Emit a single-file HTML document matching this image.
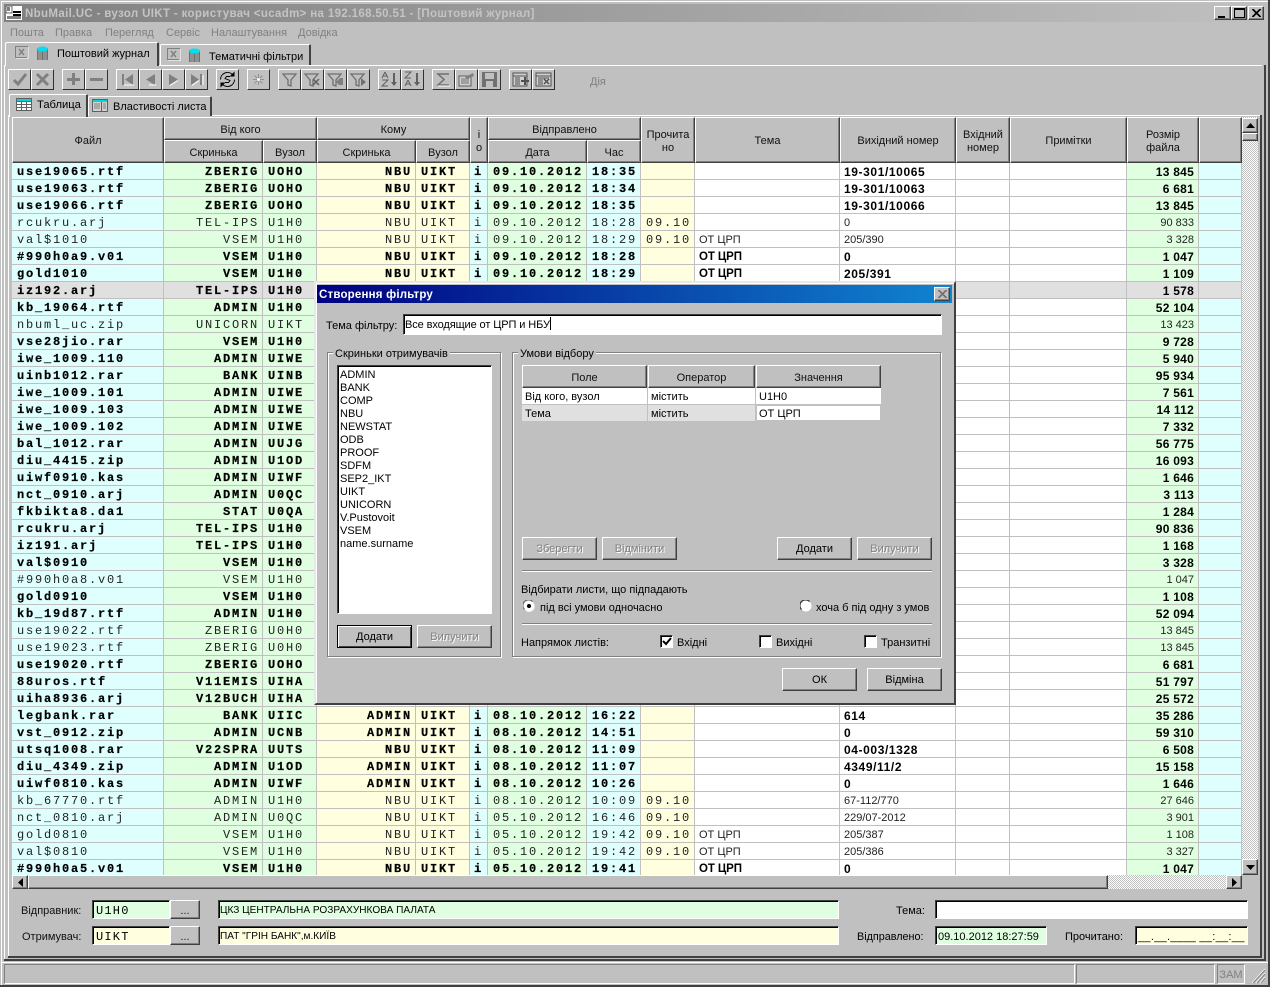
<!DOCTYPE html>
<html lang="uk">
<head>
<meta charset="utf-8">
<title>NbuMail.UC</title>
<style>
html,body{margin:0;padding:0;background:#c0c0c0}
#w{position:relative;width:1270px;height:987px;overflow:hidden;background:#c0c0c0;font:11px/13px "Liberation Sans","Noto Sans CJK SC",sans-serif;color:#000}
#w div,#w svg{position:absolute;box-sizing:border-box}
.t{white-space:nowrap;margin-top:1px}
.btn{background:#c0c0c0;border:1px solid;border-color:#fff #404040 #404040 #fff;box-shadow:inset -1px -1px 0 #808080;text-align:center;white-space:nowrap}
.hd{background:#c0c0c0;border:1px solid;border-color:#fff #404040 #404040 #fff;box-shadow:inset -1px -1px 0 #808080;text-align:center;display:flex;align-items:center;justify-content:center;line-height:13px;color:#111;padding-top:4px}
.hd.m{padding-top:2px}
.dis{color:#808080;text-shadow:1px 1px 0 #fff}
.sunk{border:1px solid;border-color:#404040 #fff #fff #404040;box-shadow:inset 1px 1px 0 #000;background:#fff;white-space:nowrap;overflow:hidden}
.tb{width:23px;height:21px;background:#c0c0c0;border:1px solid;border-color:#fff #303030 #303030 #fff}
.tb svg{left:0;top:0;width:21px;height:19px}
.ln{background:#fff}
.dk{background:#404040}
.mono{font-family:"Liberation Mono",monospace;font-size:12px;letter-spacing:1.4px}
.gb{border:1px solid #808080;box-shadow:1px 1px 0 #fff,inset 1px 1px 0 #fff}
.gt{background:#c0c0c0;padding:0 2px;white-space:nowrap;margin-top:1px}
table{position:absolute;left:12px;top:163px;width:1230px;table-layout:fixed;border-collapse:separate;border-spacing:0}
td{height:14px;padding:2px 4px 0 5px;border-right:1px solid #c0c0c0;border-bottom:1px solid #c0c0c0;overflow:hidden;white-space:nowrap;background:#fff;font:12px/14px "Liberation Mono",monospace;letter-spacing:1.8px;color:#222}
tr.b td{font-weight:bold;color:#000;-webkit-text-stroke:.2px #000}
td:nth-child(1){background:#dfffff}
td:nth-child(2),td:nth-child(3),td:nth-child(7){background:#e0ffe0}
td:nth-child(4),td:nth-child(5),td:nth-child(9){background:#ffffe0}
td:nth-child(6),td:nth-child(8),td:nth-child(15){background:#dfffff}
td:nth-child(14){background:#e0ffe0}
td:nth-child(2),td:nth-child(4){text-align:right;padding-right:3px}
td:nth-child(6){text-align:center;padding-left:0;padding-right:0}
td:nth-child(10),td:nth-child(11){font:11px/14px "Liberation Sans",sans-serif;letter-spacing:0;padding-left:4px}
td:nth-child(14){text-align:right;font:11px/14px "Liberation Sans",sans-serif;letter-spacing:0}
tr.b td:nth-child(10),tr.b td:nth-child(11),tr.b td:nth-child(14){font-size:12px;letter-spacing:.25px;-webkit-text-stroke:0}
tr.b td:nth-child(10){font-size:11.5px;letter-spacing:-.1px}
tr.b td:nth-child(11){letter-spacing:.6px}
tr.s td{background:#e0e0e0}
</style>
</head>
<body>
<div id="w">

<!-- window frame -->
<div class="ln" style="left:1px;top:1px;width:1267px;height:1px"></div>
<div class="ln" style="left:1px;top:1px;width:1px;height:985px"></div>
<div class="dk" style="left:1268px;top:0;width:2px;height:987px"></div>
<div class="dk" style="left:0;top:985px;width:1270px;height:2px"></div>

<!-- title bar -->
<div style="left:4px;top:4px;width:1262px;height:18px;background:linear-gradient(90deg,#808080,#c0c0c0)"></div>
<svg style="left:6px;top:6px" width="16" height="14" viewBox="0 0 16 14"><rect width="16" height="14" fill="#fff"/><rect x="0" y="0" width="6" height="7" fill="#fff" stroke="#000" stroke-width=".6"/><path d="M1 2h3M1 4h3" stroke="#000"/><rect x="7" y="5" width="8" height="2" fill="#000"/><rect x="7" y="8" width="8" height="2" fill="#000"/><rect x="1" y="10" width="14" height="3" fill="#808080"/></svg>
<div class="t" style="left:25px;top:7px;font-weight:bold;font-size:11.5px;letter-spacing:.35px;color:#c4c4c4">NbuMail.UC - вузол UIKT - користувач &lt;ucadm&gt; на 192.168.50.51 - [Поштовий журнал]</div>
<div class="btn" style="left:1214px;top:6px;width:17px;height:14px"><div style="left:3px;top:9px;width:7px;height:2px;background:#000"></div></div>
<div class="btn" style="left:1231px;top:6px;width:16px;height:14px"><div style="left:2px;top:1px;width:11px;height:10px;border:1px solid #000;border-top-width:2px"></div></div>
<div class="btn" style="left:1248px;top:6px;width:16px;height:14px"><svg style="left:3px;top:2px" width="9" height="8"><path d="M0 0L8 8M8 0L0 8M1 0L9 8M9 0L1 8" stroke="#000"/></svg></div>

<!-- menu -->
<div class="t" style="left:10px;top:26px;color:#808080">Пошта</div>
<div class="t" style="left:55px;top:26px;color:#808080">Правка</div>
<div class="t" style="left:105px;top:26px;color:#808080">Перегляд</div>
<div class="t" style="left:166px;top:26px;color:#808080">Сервіс</div>
<div class="t" style="left:211px;top:26px;color:#808080">Налаштування</div>
<div class="t" style="left:298px;top:26px;color:#808080">Довідка</div>

<!-- outer tabs -->
<div class="ln" style="left:4px;top:65px;width:1258px;height:1px"></div>
<div class="ln" style="left:4px;top:65px;width:1px;height:896px"></div>
<div class="dk" style="left:1264px;top:65px;width:2px;height:896px"></div>
<div class="dk" style="left:4px;top:959px;width:1262px;height:2px"></div>
<div style="left:5px;top:42px;width:154px;height:24px;background:#c0c0c0;border-top:1px solid #fff;border-left:1px solid #fff;border-right:2px solid #404040;border-radius:2px 2px 0 0"></div>
<div style="left:160px;top:44px;width:151px;height:21px;background:#c0c0c0;border-top:1px solid #fff;border-left:1px solid #fff;border-right:2px solid #404040;border-radius:2px 2px 0 0"></div>
<svg style="left:15px;top:46px" width="14" height="13"><rect x=".5" y=".5" width="12" height="11" fill="#c0c0c0" stroke="#808080"/><path d="M4 3l5 6M9 3l-5 6" stroke="#808080" stroke-width="1.4"/><path d="M13 1v12H1" stroke="#fff" fill="none"/></svg>
<svg style="left:36px;top:46px" width="13" height="15"><rect x="1" y="2" width="11" height="12" fill="#707070"/><path d="M3 4v10M5 4v10M8 4v10M10 4v10" stroke="#b0b0b0"/><ellipse cx="6.500" cy="3" rx="5.500" ry="2.500" fill="#00e0f0"/></svg>
<div class="t" style="left:57px;top:47px">Поштовий журнал</div>
<svg style="left:167px;top:48px" width="14" height="13"><rect x=".5" y=".5" width="12" height="11" fill="#c0c0c0" stroke="#808080"/><path d="M4 3l5 6M9 3l-5 6" stroke="#808080" stroke-width="1.4"/><path d="M13 1v12H1" stroke="#fff" fill="none"/></svg>
<svg style="left:188px;top:48px" width="13" height="15"><rect x="1" y="2" width="11" height="12" fill="#707070"/><path d="M3 4v10M5 4v10M8 4v10M10 4v10" stroke="#b0b0b0"/><ellipse cx="6.500" cy="3" rx="5.500" ry="2.500" fill="#00e0f0"/></svg>
<div class="t" style="left:209px;top:50px">Тематичні фільтри</div>

<!-- toolbar -->
<div class="tb" style="left:8px;top:69px"><svg viewBox="0 0 21 19"><path d="M5 10l4 4 8-10" fill="none" stroke="#808080" stroke-width="3"/></svg></div>
<div class="tb" style="left:31px;top:69px"><svg viewBox="0 0 21 19"><path d="M5 4l11 11M16 4L5 15" fill="none" stroke="#808080" stroke-width="3"/></svg></div>
<div class="tb" style="left:62px;top:69px"><svg viewBox="0 0 21 19"><path d="M10.500 3v12M4 9.500h13" stroke="#808080" stroke-width="3"/></svg></div>
<div class="tb" style="left:85px;top:69px"><svg viewBox="0 0 21 19"><path d="M4 9.500h13" stroke="#808080" stroke-width="3"/></svg></div>
<div class="tb" style="left:116px;top:69px"><svg viewBox="0 0 21 19"><path d="M5 4h2v11H5zM16 4v11L8 9.500z" fill="#808080"/><path d="M17 15H7" stroke="#fff"/></svg></div>
<div class="tb" style="left:139px;top:69px"><svg viewBox="0 0 21 19"><path d="M15 4v11L6 9.500z" fill="#808080"/><path d="M16 15H9" stroke="#fff"/></svg></div>
<div class="tb" style="left:162px;top:69px"><svg viewBox="0 0 21 19"><path d="M6 4v11l9-5.500z" fill="#808080"/><path d="M7 15.500l8-5" stroke="#fff"/></svg></div>
<div class="tb" style="left:185px;top:69px"><svg viewBox="0 0 21 19"><path d="M14 4h2v11h-2zM5 4v11l8-5.500z" fill="#808080"/><path d="M6 15.500l7-5M17 5v10" stroke="#fff"/></svg></div>
<div class="tb" style="left:216px;top:69px"><svg viewBox="0 0 21 19"><path d="M3.500 9.500A7 7 0 0 1 15.500 4.600M17.500 9.500A7 7 0 0 1 5.500 14.400" fill="none" stroke="#000"/><path d="M17.500 1.500v5h-5zM3.500 17.500v-5h5z" fill="#000"/><path d="M13 6.500H9.500L8 8.500l5 2-1.500 2H8" fill="none" stroke="#000" stroke-width=".9"/></svg></div>
<div class="tb" style="left:247px;top:69px"><svg viewBox="0 0 21 19"><path d="M10.500 4v11M5 9.500h11M6.500 5.500l8 8M14.500 5.500l-8 8" stroke="#909090"/><circle cx="10.500" cy="9.500" r="1.500" fill="#fff"/></svg></div>
<div class="tb" style="left:278px;top:69px"><svg viewBox="0 0 21 19"><path d="M4 4h13l-5 6v6l-3-1v-5z" fill="#c0c0c0" stroke="#707070" stroke-width="1.300"/></svg></div>
<div class="tb" style="left:301px;top:69px"><svg viewBox="0 0 21 19"><path d="M3 4h13l-5 6v6l-3-1v-5z" fill="#c0c0c0" stroke="#707070" stroke-width="1.300"/><path d="M11 9l6 6M17 9l-6 6" stroke="#606060" stroke-width="1.500"/></svg></div>
<div class="tb" style="left:324px;top:69px"><svg viewBox="0 0 21 19"><path d="M3 4h13l-5 6v6l-3-1v-5z" fill="#c0c0c0" stroke="#707070" stroke-width="1.300"/><path d="M18 8h-3l-4 4 3 3h4z" fill="#808080"/></svg></div>
<div class="tb" style="left:347px;top:69px"><svg viewBox="0 0 21 19"><path d="M3 4h13l-5 6v6l-3-1v-5z" fill="#c0c0c0" stroke="#707070" stroke-width="1.300"/><path d="M13 8l5 4-5 4z" fill="#707070"/></svg></div>
<div class="tb" style="left:378px;top:69px"><svg viewBox="0 0 21 19"><path d="M6 2l-3 6M6 2l3 6M4 6h4M3 10h6l-6 6h6" fill="none" stroke="#606060"/><path d="M15 3v11" stroke="#606060" stroke-width="2"/><path d="M12 12h6l-3 4z" fill="#606060"/></svg></div>
<div class="tb" style="left:401px;top:69px"><svg viewBox="0 0 21 19"><path d="M3 2h6L3 8h6M6 10l-3 6M6 10l3 6M4 14h4" fill="none" stroke="#606060"/><path d="M15 3v11" stroke="#606060" stroke-width="2"/><path d="M12 12h6l-3 4z" fill="#606060"/></svg></div>
<div class="tb" style="left:432px;top:69px"><svg viewBox="0 0 21 19"><path d="M16 4H5l6 5.500-6 5.500h11" fill="none" stroke="#707070" stroke-width="1.500"/><path d="M5 16h12" stroke="#fff"/></svg></div>
<div class="tb" style="left:455px;top:69px"><svg viewBox="0 0 21 19"><path d="M3 6h12v10H3z" fill="#d0d0d0" stroke="#606060"/><path d="M5 9h8M5 11h8M5 13h8" stroke="#707070"/><path d="M9 7l8-4 1 3-7 3z" fill="#808080"/></svg></div>
<div class="tb" style="left:478px;top:69px"><svg viewBox="0 0 21 19"><rect x="3" y="2" width="15" height="15" fill="#707070"/><rect x="6" y="3" width="9" height="6" fill="#c0c0c0"/><rect x="7" y="11" width="7" height="6" fill="#c0c0c0"/></svg></div>
<div class="tb" style="left:509px;top:69px"><svg viewBox="0 0 21 19"><rect x="3" y="3" width="14" height="13" fill="#d0d0d0" stroke="#505050"/><path d="M3 6h14M5 8h5M5 10h5M5 12h5M5 14h5" stroke="#505050"/><path d="M11 11h8M15 7v8" stroke="#505050" stroke-width="2"/></svg></div>
<div class="tb" style="left:532px;top:69px"><svg viewBox="0 0 21 19"><rect x="3" y="3" width="15" height="13" fill="#d0d0d0" stroke="#505050"/><path d="M3 6h15M5 8h11M5 10h5M5 12h5M5 14h5" stroke="#505050"/><path d="M11 9l5 5M16 9l-5 5" stroke="#505050" stroke-width="1.500"/></svg></div>
<div class="t" style="left:590px;top:75px;color:#808080">Дія</div>

<!-- inner tabs -->
<div class="ln" style="left:8px;top:115px;width:1252px;height:1px"></div>
<div class="ln" style="left:8px;top:115px;width:1px;height:842px"></div>
<div class="dk" style="left:1260px;top:115px;width:2px;height:843px"></div>
<div class="dk" style="left:8px;top:956px;width:1254px;height:2px"></div>
<div style="left:9px;top:94px;width:79px;height:23px;background:#c0c0c0;border-top:1px solid #fff;border-left:1px solid #fff;border-right:2px solid #404040;border-radius:2px 2px 0 0"></div>
<div style="left:88px;top:96px;width:124px;height:20px;background:#c0c0c0;border-top:1px solid #fff;border-left:1px solid #fff;border-right:2px solid #404040;border-radius:2px 2px 0 0"></div>
<svg style="left:16px;top:98px" width="16" height="13"><rect width="16" height="13" fill="#fff"/><rect width="16" height="3" fill="#00d8d8"/><path d="M0 .5h16M0 3.500h16M0 6.500h16M0 9.500h16M0 12.500h16M.5 0v13M5.500 3v10M10.500 3v10M15.500 0v13" stroke="#606060"/></svg>
<div class="t" style="left:37px;top:98px;font-size:11.200px">Таблица</div>
<svg style="left:92px;top:99px" width="16" height="13"><rect width="16" height="13" fill="#d0d0d0"/><rect width="16" height="3" fill="#00d8d8"/><path d="M0 .5h16M0 12.500h16M.5 0v13M15.500 0v13M9.500 3v10" stroke="#606060"/><path d="M2 5h6M2 7h6M2 9h6M11 5h3M11 7h3M11 9h3" stroke="#808080"/></svg>
<div class="t" style="left:113px;top:100px">Властивості листа</div>

<!-- grid headers -->
<div class="hd m" style="left:12px;top:117px;width:152px;height:46px">Файл</div>
<div class="hd" style="left:164px;top:117px;width:153px;height:23px">Від кого</div>
<div class="hd" style="left:164px;top:140px;width:99px;height:23px">Скринька</div>
<div class="hd" style="left:263px;top:140px;width:54px;height:23px">Вузол</div>
<div class="hd" style="left:317px;top:117px;width:153px;height:23px">Кому</div>
<div class="hd" style="left:317px;top:140px;width:99px;height:23px">Скринька</div>
<div class="hd" style="left:416px;top:140px;width:54px;height:23px">Вузол</div>
<div class="hd" style="left:470px;top:117px;width:18px;height:46px">i<br>o</div>
<div class="hd" style="left:488px;top:117px;width:153px;height:23px">Відправлено</div>
<div class="hd" style="left:488px;top:140px;width:99px;height:23px">Дата</div>
<div class="hd" style="left:587px;top:140px;width:54px;height:23px">Час</div>
<div class="hd" style="left:641px;top:117px;width:54px;height:46px">Прочита<br>но</div>
<div class="hd m" style="left:695px;top:117px;width:145px;height:46px">Тема</div>
<div class="hd m" style="left:840px;top:117px;width:116px;height:46px">Вихідний номер</div>
<div class="hd" style="left:956px;top:117px;width:54px;height:46px">Вхідний<br>номер</div>
<div class="hd m" style="left:1010px;top:117px;width:117px;height:46px">Примітки</div>
<div class="hd" style="left:1127px;top:117px;width:72px;height:46px">Розмір<br>файла</div>
<div class="hd" style="left:1199px;top:117px;width:43px;height:46px"></div>

<!-- grid body -->
<div style="left:0;top:0;width:1242px;height:875px;overflow:hidden;pointer-events:none">
<table>
<colgroup><col style="width:152px"><col style="width:99px"><col style="width:54px"><col style="width:99px"><col style="width:54px"><col style="width:18px"><col style="width:99px"><col style="width:54px"><col style="width:54px"><col style="width:145px"><col style="width:116px"><col style="width:54px"><col style="width:117px"><col style="width:72px"><col style="width:43px"></colgroup>
<tr class="b"><td>use19065.rtf<td>ZBERIG<td>UOHO<td>NBU<td>UIKT<td>i<td>09.10.2012<td>18:35<td><td><td>19-301/10065<td><td><td>13 845<td></tr>
<tr class="b"><td>use19063.rtf<td>ZBERIG<td>UOHO<td>NBU<td>UIKT<td>i<td>09.10.2012<td>18:34<td><td><td>19-301/10063<td><td><td>6 681<td></tr>
<tr class="b"><td>use19066.rtf<td>ZBERIG<td>UOHO<td>NBU<td>UIKT<td>i<td>09.10.2012<td>18:35<td><td><td>19-301/10066<td><td><td>13 845<td></tr>
<tr><td>rcukru.arj<td>TEL-IPS<td>U1H0<td>NBU<td>UIKT<td>i<td>09.10.2012<td>18:28<td>09.10<td><td>0<td><td><td>90 833<td></tr>
<tr><td>val$1010<td>VSEM<td>U1H0<td>NBU<td>UIKT<td>i<td>09.10.2012<td>18:29<td>09.10<td>ОТ ЦРП<td>205/390<td><td><td>3 328<td></tr>
<tr class="b"><td>#990h0a9.v01<td>VSEM<td>U1H0<td>NBU<td>UIKT<td>i<td>09.10.2012<td>18:28<td><td>ОТ ЦРП<td>0<td><td><td>1 047<td></tr>
<tr class="b"><td>gold1010<td>VSEM<td>U1H0<td>NBU<td>UIKT<td>i<td>09.10.2012<td>18:29<td><td>ОТ ЦРП<td>205/391<td><td><td>1 109<td></tr>
<tr class="b s"><td>iz192.arj<td>TEL-IPS<td>U1H0<td><td><td><td><td><td><td><td><td><td><td>1 578<td></tr>
<tr class="b"><td>kb_19064.rtf<td>ADMIN<td>U1H0<td><td><td><td><td><td><td><td><td><td><td>52 104<td></tr>
<tr><td>nbuml_uc.zip<td>UNICORN<td>UIKT<td><td><td><td><td><td><td><td><td><td><td>13 423<td></tr>
<tr class="b"><td>vse28jio.rar<td>VSEM<td>U1H0<td><td><td><td><td><td><td><td><td><td><td>9 728<td></tr>
<tr class="b"><td>iwe_1009.110<td>ADMIN<td>UIWE<td><td><td><td><td><td><td><td><td><td><td>5 940<td></tr>
<tr class="b"><td>uinb1012.rar<td>BANK<td>UINB<td><td><td><td><td><td><td><td><td><td><td>95 934<td></tr>
<tr class="b"><td>iwe_1009.101<td>ADMIN<td>UIWE<td><td><td><td><td><td><td><td><td><td><td>7 561<td></tr>
<tr class="b"><td>iwe_1009.103<td>ADMIN<td>UIWE<td><td><td><td><td><td><td><td><td><td><td>14 112<td></tr>
<tr class="b"><td>iwe_1009.102<td>ADMIN<td>UIWE<td><td><td><td><td><td><td><td><td><td><td>7 332<td></tr>
<tr class="b"><td>bal_1012.rar<td>ADMIN<td>UUJG<td><td><td><td><td><td><td><td><td><td><td>56 775<td></tr>
<tr class="b"><td>diu_4415.zip<td>ADMIN<td>U1OD<td><td><td><td><td><td><td><td><td><td><td>16 093<td></tr>
<tr class="b"><td>uiwf0910.kas<td>ADMIN<td>UIWF<td><td><td><td><td><td><td><td><td><td><td>1 646<td></tr>
<tr class="b"><td>nct_0910.arj<td>ADMIN<td>U0QC<td><td><td><td><td><td><td><td><td><td><td>3 113<td></tr>
<tr class="b"><td>fkbikta8.da1<td>STAT<td>U0QA<td><td><td><td><td><td><td><td><td><td><td>1 284<td></tr>
<tr class="b"><td>rcukru.arj<td>TEL-IPS<td>U1H0<td><td><td><td><td><td><td><td><td><td><td>90 836<td></tr>
<tr class="b"><td>iz191.arj<td>TEL-IPS<td>U1H0<td><td><td><td><td><td><td><td><td><td><td>1 168<td></tr>
<tr class="b"><td>val$0910<td>VSEM<td>U1H0<td><td><td><td><td><td><td><td><td><td><td>3 328<td></tr>
<tr><td>#990h0a8.v01<td>VSEM<td>U1H0<td><td><td><td><td><td><td><td><td><td><td>1 047<td></tr>
<tr class="b"><td>gold0910<td>VSEM<td>U1H0<td><td><td><td><td><td><td><td><td><td><td>1 108<td></tr>
<tr class="b"><td>kb_19d87.rtf<td>ADMIN<td>U1H0<td><td><td><td><td><td><td><td><td><td><td>52 094<td></tr>
<tr><td>use19022.rtf<td>ZBERIG<td>U0H0<td><td><td><td><td><td><td><td><td><td><td>13 845<td></tr>
<tr><td>use19023.rtf<td>ZBERIG<td>U0H0<td><td><td><td><td><td><td><td><td><td><td>13 845<td></tr>
<tr class="b"><td>use19020.rtf<td>ZBERIG<td>UOHO<td><td><td><td><td><td><td><td><td><td><td>6 681<td></tr>
<tr class="b"><td>88uros.rtf<td>V11EMIS<td>UIHA<td><td><td><td><td><td><td><td><td><td><td>51 797<td></tr>
<tr class="b"><td>uiha8936.arj<td>V12BUCH<td>UIHA<td><td><td><td><td><td><td><td><td><td><td>25 572<td></tr>
<tr class="b"><td>legbank.rar<td>BANK<td>UIIC<td>ADMIN<td>UIKT<td>i<td>08.10.2012<td>16:22<td><td><td>614<td><td><td>35 286<td></tr>
<tr class="b"><td>vst_0912.zip<td>ADMIN<td>UCNB<td>ADMIN<td>UIKT<td>i<td>08.10.2012<td>14:51<td><td><td>0<td><td><td>59 310<td></tr>
<tr class="b"><td>utsq1008.rar<td>V22SPRA<td>UUTS<td>NBU<td>UIKT<td>i<td>08.10.2012<td>11:09<td><td><td>04-003/1328<td><td><td>6 508<td></tr>
<tr class="b"><td>diu_4349.zip<td>ADMIN<td>U1OD<td>ADMIN<td>UIKT<td>i<td>08.10.2012<td>11:07<td><td><td>4349/11/2<td><td><td>15 158<td></tr>
<tr class="b"><td>uiwf0810.kas<td>ADMIN<td>UIWF<td>ADMIN<td>UIKT<td>i<td>08.10.2012<td>10:26<td><td><td>0<td><td><td>1 646<td></tr>
<tr><td>kb_67770.rtf<td>ADMIN<td>U1H0<td>NBU<td>UIKT<td>i<td>08.10.2012<td>10:09<td>09.10<td><td>67-112/770<td><td><td>27 646<td></tr>
<tr><td>nct_0810.arj<td>ADMIN<td>U0QC<td>NBU<td>UIKT<td>i<td>05.10.2012<td>16:46<td>09.10<td><td>229/07-2012<td><td><td>3 901<td></tr>
<tr><td>gold0810<td>VSEM<td>U1H0<td>NBU<td>UIKT<td>i<td>05.10.2012<td>19:42<td>09.10<td>ОТ ЦРП<td>205/387<td><td><td>1 108<td></tr>
<tr><td>val$0810<td>VSEM<td>U1H0<td>NBU<td>UIKT<td>i<td>05.10.2012<td>19:42<td>09.10<td>ОТ ЦРП<td>205/386<td><td><td>3 327<td></tr>
<tr class="b"><td>#990h0a5.v01<td>VSEM<td>U1H0<td>NBU<td>UIKT<td>i<td>05.10.2012<td>19:41<td><td>ОТ ЦРП<td>0<td><td><td>1 047<td></tr>
</table>
</div>

<!-- vertical scrollbar -->
<div style="left:1242px;top:117px;width:16px;height:758px;background:repeating-conic-gradient(#c0c0c0 0 25%,#fff 0 50%) 0 0/2px 2px"></div>
<div class="btn" style="left:1242px;top:118px;width:16px;height:15px"><svg style="left:3px;top:4px" width="9" height="5"><path d="M4.500 0L9 5H0z" fill="#000"/></svg></div>
<div class="btn" style="left:1242px;top:133px;width:16px;height:8px"></div>
<div class="btn" style="left:1242px;top:859px;width:16px;height:16px"><svg style="left:3px;top:5px" width="9" height="5"><path d="M0 0h9L4.500 5z" fill="#000"/></svg></div>

<!-- horizontal scrollbar -->
<div style="left:12px;top:875px;width:1230px;height:14px;background:repeating-conic-gradient(#c0c0c0 0 25%,#fff 0 50%) 0 0/2px 2px"></div>
<div class="btn" style="left:12px;top:875px;width:16px;height:14px"><svg style="left:5px;top:2px" width="5" height="9"><path d="M5 0v9L0 4.500z" fill="#000"/></svg></div>
<div class="btn" style="left:28px;top:875px;width:1080px;height:14px"></div>
<div class="btn" style="left:1226px;top:875px;width:16px;height:14px"><svg style="left:5px;top:2px" width="5" height="9"><path d="M0 0v9l5-4.500z" fill="#000"/></svg></div>

<!-- bottom form -->
<div class="t" style="left:21px;top:904px;color:#111">Відправник:</div>
<div class="sunk mono" style="left:92px;top:900px;width:78px;height:19px;background:#e0ffe0;padding:3px 0 0 3px;line-height:14px;letter-spacing:1.2px">U1H0</div>
<div class="btn" style="left:170px;top:900px;width:30px;height:19px;line-height:20px;color:#222">...</div>
<div class="sunk" style="left:218px;top:900px;width:621px;height:19px;background:#e0ffe0;padding:3px 0 0 1px;font-size:10.100px;line-height:14px">ЦКЗ ЦЕНТРАЛЬНА РОЗРАХУНКОВА ПАЛАТА</div>
<div class="t" style="left:896px;top:904px">Тема:</div>
<div class="sunk" style="left:935px;top:900px;width:313px;height:19px"></div>

<div class="t" style="left:22px;top:930px;color:#111">Отримувач:</div>
<div class="sunk mono" style="left:92px;top:926px;width:78px;height:19px;background:#ffffe0;padding:3px 0 0 3px;line-height:14px;letter-spacing:1.2px">UIKT</div>
<div class="btn" style="left:170px;top:926px;width:30px;height:19px;line-height:20px;color:#222">...</div>
<div class="sunk" style="left:218px;top:926px;width:621px;height:19px;background:#ffffe0;padding:3px 0 0 1px;font-size:10.100px;line-height:14px">ПАТ "ГРІН БАНК",м.КИЇВ</div>
<div class="t" style="left:857px;top:930px;font-size:10.800px">Відправлено:</div>
<div class="sunk" style="left:935px;top:926px;width:112px;height:19px;background:#e0ffe0;padding:3px 0 0 2px;line-height:14px">09.10.2012 18:27:59</div>
<div class="t" style="left:1065px;top:930px">Прочитано:</div>
<div class="sunk" style="left:1135px;top:926px;width:113px;height:19px;background:#ffffe0;padding:3px 0 0 2px;line-height:14px;letter-spacing:.3px">__.__.____ __:__:__</div>

<!-- status bar -->
<div class="ln" style="left:2px;top:962px;width:1266px;height:1px"></div>
<div style="left:4px;top:964px;width:1071px;height:20px;border:1px solid;border-color:#808080 #fff #fff #808080"></div>
<div style="left:1076px;top:964px;width:139px;height:20px;border:1px solid;border-color:#808080 #fff #fff #808080"></div>
<div style="left:1217px;top:964px;width:28px;height:20px;border:1px solid;border-color:#808080 #fff #fff #808080;text-align:center;color:#808080;line-height:20px">ЗАМ</div>
<svg style="left:1250px;top:966px" width="16" height="18"><path d="M15 3L2 17M15 7L6 17M15 11L10 17" stroke="#fff"/><path d="M15 4L3 17M15 8L7 17M15 12L11 17" stroke="#808080"/></svg>

<!-- dialog -->
<div style="left:314px;top:281px;width:642px;height:424px;background:#c0c0c0;border:2px solid;border-color:#e8e8e8 #404040 #404040 #e8e8e8;box-shadow:inset 1px 1px 0 #fff"></div>
<div style="left:317px;top:285px;width:635px;height:18px;background:linear-gradient(90deg,#000080,#1084d0)"></div>
<div class="t" style="left:319px;top:288px;color:#fff;font-weight:bold;font-size:11.500px;letter-spacing:.2px">Створення фільтру</div>
<div class="btn" style="left:934px;top:287px;width:16px;height:14px"><svg style="left:3px;top:2px" width="9" height="8"><path d="M0 0L8 8M8 0L0 8M1 0L9 8M9 0L1 8" stroke="#707070"/></svg></div>

<div class="t" style="left:326px;top:319px">Тема фільтру:</div>
<div class="sunk" style="left:403px;top:314px;width:539px;height:21px;padding:2px 0 0 1px;line-height:14px;letter-spacing:-.1px">Все входящие от ЦРП и НБУ<span style="display:inline-block;width:1px;height:13px;background:#000;vertical-align:-2px"></span></div>

<!-- group 1 -->
<div class="gb" style="left:327px;top:352px;width:174px;height:305px"></div>
<div class="gt" style="left:333px;top:347px">Скриньки отримувачів</div>
<div class="sunk" style="left:337px;top:365px;width:155px;height:249px"></div>
<div class="t" style="left:340px;top:368px">ADMIN</div>
<div class="t" style="left:340px;top:381px">BANK</div>
<div class="t" style="left:340px;top:394px">COMP</div>
<div class="t" style="left:340px;top:407px">NBU</div>
<div class="t" style="left:340px;top:420px">NEWSTAT</div>
<div class="t" style="left:340px;top:433px">ODB</div>
<div class="t" style="left:340px;top:446px">PROOF</div>
<div class="t" style="left:340px;top:459px">SDFM</div>
<div class="t" style="left:340px;top:472px">SEP2_IKT</div>
<div class="t" style="left:340px;top:485px">UIKT</div>
<div class="t" style="left:340px;top:498px">UNICORN</div>
<div class="t" style="left:340px;top:511px">V.Pustovoit</div>
<div class="t" style="left:340px;top:524px">VSEM</div>
<div class="t" style="left:340px;top:537px">name.surname</div>
<div class="btn" style="left:337px;top:625px;width:75px;height:23px;border:1px solid #000;box-shadow:inset 1px 1px 0 #fff,inset -1px -1px 0 #404040;line-height:23px">Додати</div>
<div class="btn dis" style="left:417px;top:625px;width:75px;height:23px;line-height:23px">Вилучити</div>

<!-- group 2 -->
<div class="gb" style="left:512px;top:352px;width:429px;height:305px"></div>
<div class="gt" style="left:518px;top:347px">Умови відбору</div>
<div class="hd" style="left:522px;top:365px;width:125px;height:23px">Поле</div>
<div class="hd" style="left:648px;top:365px;width:107px;height:23px">Оператор</div>
<div class="hd" style="left:756px;top:365px;width:125px;height:23px">Значення</div>
<div style="left:522px;top:387px;width:125px;height:16px;background:#fff;padding:3px 0 0 3px" class="t">Від кого, вузол</div>
<div style="left:648px;top:387px;width:107px;height:16px;background:#fff;padding:3px 0 0 3px" class="t">містить</div>
<div style="left:756px;top:387px;width:125px;height:16px;background:#fff;padding:3px 0 0 3px" class="t">U1H0</div>
<div style="left:522px;top:404px;width:125px;height:16px;background:#e0e0e0;padding:3px 0 0 3px" class="t">Тема</div>
<div style="left:648px;top:404px;width:107px;height:16px;background:#e0e0e0;padding:3px 0 0 3px" class="t">містить</div>
<div style="left:757px;top:405px;width:123px;height:14px;background:#fff;padding:2px 0 0 2px" class="t">ОТ ЦРП</div>

<div class="btn dis" style="left:522px;top:537px;width:75px;height:23px;line-height:23px">Зберегти</div>
<div class="btn dis" style="left:602px;top:537px;width:75px;height:23px;line-height:23px">Відмінити</div>
<div class="btn" style="left:777px;top:537px;width:75px;height:23px;line-height:23px">Додати</div>
<div class="btn dis" style="left:857px;top:537px;width:75px;height:23px;line-height:23px">Вилучити</div>
<div style="left:522px;top:570px;width:410px;height:1px;background:#808080"></div>
<div class="ln" style="left:522px;top:571px;width:410px;height:1px"></div>
<div class="t" style="left:521px;top:583px">Відбирати листи, що підпадають</div>
<svg style="left:523px;top:600px" width="13" height="13"><circle cx="6" cy="6" r="5.500" fill="#fff"/><path d="M1.500 9.500a5.500 5.500 0 0 1 8-8" fill="none" stroke="#606060"/><path d="M10.800 3.500a5.500 5.500 0 0 1-7.500 7.500" fill="none" stroke="#e8e8e8"/><circle cx="6" cy="6" r="2" fill="#000"/></svg>
<div class="t" style="left:540px;top:601px">під всі умови одночасно</div>
<svg style="left:800px;top:600px" width="13" height="13"><circle cx="6" cy="6" r="5.500" fill="#fff"/><path d="M1.500 9.500a5.500 5.500 0 0 1 8-8" fill="none" stroke="#404040" stroke-width="1.300"/></svg>
<div class="t" style="left:816px;top:601px">хоча б під одну з умов</div>
<div style="left:522px;top:623px;width:410px;height:1px;background:#808080"></div>
<div class="ln" style="left:522px;top:624px;width:410px;height:1px"></div>
<div class="t" style="left:521px;top:636px">Напрямок листів:</div>
<div class="sunk" style="left:660px;top:635px;width:13px;height:13px"><svg style="left:1px;top:1px" width="10" height="10"><path d="M1 4l3 3 5-6" fill="none" stroke="#000" stroke-width="2"/></svg></div>
<div class="t" style="left:677px;top:636px">Вхідні</div>
<div class="sunk" style="left:759px;top:635px;width:13px;height:13px"></div>
<div class="t" style="left:776px;top:636px">Вихідні</div>
<div class="sunk" style="left:864px;top:635px;width:13px;height:13px"></div>
<div class="t" style="left:881px;top:636px">Транзитні</div>

<div class="btn" style="left:782px;top:668px;width:75px;height:23px;line-height:23px">ОК</div>
<div class="btn" style="left:867px;top:668px;width:75px;height:23px;line-height:23px">Відміна</div>

</div>
</body>
</html>
